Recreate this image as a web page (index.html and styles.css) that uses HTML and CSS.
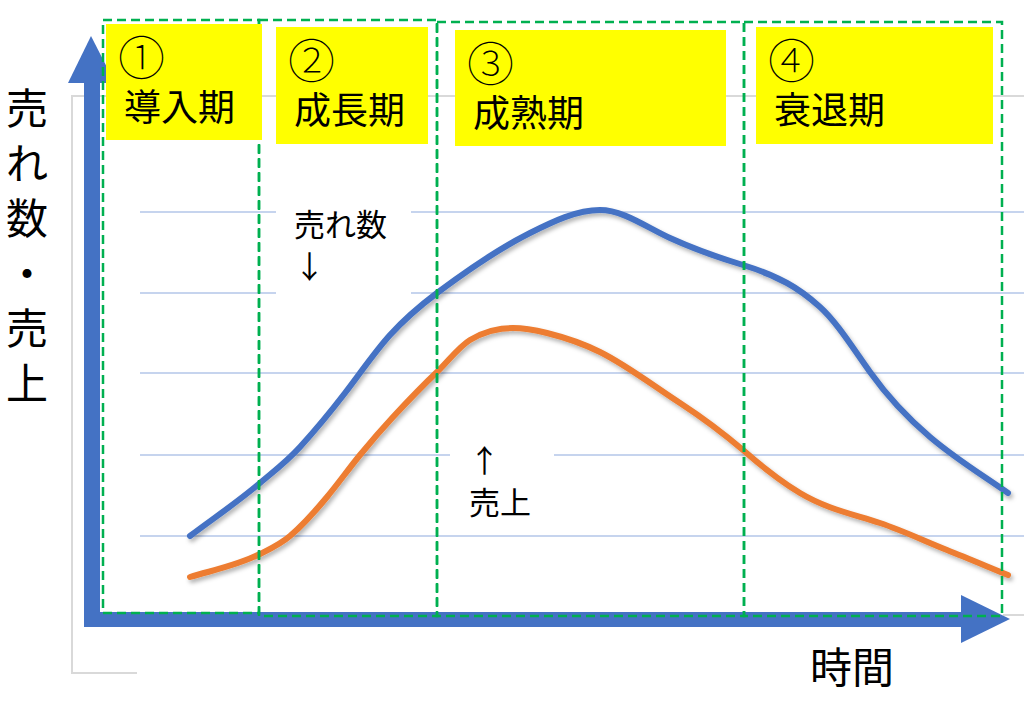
FILE: index.html
```html
<!DOCTYPE html>
<html lang="ja">
<head>
<meta charset="utf-8">
<title>製品ライフサイクル</title>
<link rel="stylesheet" href="styles.css">
</head>
<body>
<div class="chart">
  <svg class="canvas" width="1024" height="701" viewBox="0 0 1024 701" xmlns="http://www.w3.org/2000/svg">
    <defs>
      <filter id="shadow" x="-10%" y="-10%" width="120%" height="130%">
        <feDropShadow dx="2" dy="3" stdDeviation="2" flood-color="#000" flood-opacity="0.3"/>
      </filter>
    </defs>
    <g class="grid">
      <line x1="140" y1="212" x2="276" y2="212"/>
      <line x1="411" y1="212" x2="1024" y2="212"/>
      <line x1="140" y1="293" x2="276" y2="293"/>
      <line x1="411" y1="293" x2="1024" y2="293"/>
      <line x1="140" y1="373" x2="1024" y2="373"/>
      <line x1="140" y1="455" x2="450" y2="455"/>
      <line x1="554" y1="455" x2="1024" y2="455"/>
      <line x1="140" y1="536" x2="1024" y2="536"/>
    </g>
    <g class="frame">
      <polyline points="1024,96 72,96 72,673 137,673"/>
      <line x1="1003" y1="615" x2="1024" y2="615"/>
    </g>
    <g class="axis">
      <rect x="84" y="80" width="16" height="547"/>
      <polygon points="91,36 115,83 68,83"/>
      <rect x="84" y="612" width="880" height="15"/>
      <polygon points="961,595 1010,619 961,643"/>
    </g>
    <g class="curves" filter="url(#shadow)">
      <path class="units" d="M190 536 C213.3 518.3 236.7 502.8 260 483 C273.3 471.7 286.7 461.7 300 447 C315 430.5 330 412.5 345 393 C360 373.5 375 351.5 390 335 C405.7 317.8 421.3 304.8 437 293 C468 269.8 499 248.5 530 233 C553.3 221.3 576.7 210 600 210 C623.3 210 646.7 227.5 670 238 C694.3 249 718.7 257.7 743 265 C757.7 269.4 772.3 275 787 283 C798 289 809 297.1 820 307 C836.7 322 853.3 348.7 870 372 C890 400 910 420 930 437 C956 459.1 982 474.8 1008 493"/>
      <path class="sales" d="M190 577 C213.3 570 236.7 565.7 260 554 C270 549 280 544.5 290 536 C302.3 525.5 314.7 511.8 327 497 C338 483.8 349 468.4 360 455 C371 441.6 382 428.9 393 417 C407.7 401.2 422.3 385.9 437 372 C448 361.6 459 346.6 470 340 C484.3 331.4 498.7 328 513 328 C524.3 328 535.7 330.2 547 333 C564.7 337.4 582.3 343.2 600 352 C626.7 365.3 653.3 385.7 680 403 C701 416.7 722 432.2 743 450 C762 466.7 781 481.6 800 493 C826.7 509 853.3 514.2 880 523 C902.3 530.4 924.7 541.1 947 550 C967.3 558.1 987.7 566.7 1008 575"/>
    </g>
    <g class="phases">
      <rect x="103" y="20" width="156" height="593"/>
      <rect x="259" y="20" width="178" height="596"/>
      <rect x="437" y="22" width="307" height="594"/>
      <rect x="744" y="22" width="258" height="594"/>
    </g>
  </svg>

  <div class="stage stage-1"><span class="num">①</span><span>導入期</span></div>
  <div class="stage stage-2"><span class="num">②</span><span>成長期</span></div>
  <div class="stage stage-3"><span class="num">③</span><span>成熟期</span></div>
  <div class="stage stage-4"><span class="num">④</span><span>衰退期</span></div>

  <div class="y-label">売<br>れ<br>数<br>・<br>売<br>上</div>
  <div class="x-label">時間</div>

  <div class="note note-units">売れ数<br>↓</div>
  <div class="note note-sales">↑<br>売上</div>
</div>
</body>
</html>
```

FILE: styles.css
```css
html, body {
  margin: 0;
  padding: 0;
  background: #ffffff;
}

body {
  font-family: "Noto Sans CJK JP", "Noto Sans", sans-serif;
  color: #000;
}

.chart {
  position: relative;
  width: 1024px;
  height: 701px;
  overflow: hidden;
}

.canvas {
  position: absolute;
  left: 0;
  top: 0;
  display: block;
}

.grid line {
  stroke: #c6d4ee;
  stroke-width: 2;
}

.frame polyline,
.frame line {
  fill: none;
  stroke: #d9d9d9;
  stroke-width: 2;
}

.axis rect,
.axis polygon {
  fill: #4472c4;
}

.curves path {
  fill: none;
  stroke-width: 6;
  stroke-linecap: round;
  stroke-linejoin: round;
}

.curves .units {
  stroke: #4472c4;
}

.curves .sales {
  stroke: #ed7d31;
}

.phases rect {
  fill: none;
  stroke: #00b050;
  stroke-width: 2.5;
  stroke-dasharray: 9 5;
}

.stage {
  position: absolute;
  box-sizing: border-box;
  background: #ffff00;
  padding: 6px 0 0 18px;
  display: flex;
  flex-direction: column;
  align-items: flex-start;
  font-size: 37px;
  line-height: 50px;
  white-space: nowrap;
}

.stage .num {
  font-size: 47px;
  font-weight: 100;
  line-height: 50px;
  height: 50px;
  margin-left: -6px;
}

.stage-1 { left: 106px; top: 24px; width: 156px; height: 116px; }
.stage-2 { left: 276px; top: 27px; width: 152px; height: 117px; }
.stage-3 { left: 455px; top: 30px; width: 271px; height: 116px; }
.stage-4 { left: 756px; top: 27px; width: 237px; height: 117px; }

.y-label {
  position: absolute;
  left: 6px;
  top: 78px;
  width: 42px;
  font-size: 42px;
  line-height: 55px;
  text-align: center;
}

.x-label {
  position: absolute;
  left: 810px;
  top: 637px;
  font-size: 42px;
  line-height: 55px;
  white-space: nowrap;
}

.note {
  position: absolute;
  font-size: 31px;
  line-height: 42px;
  white-space: nowrap;
}

.note-units { left: 294px; top: 202px; }
.note-sales { left: 469px; top: 438px; }
```
